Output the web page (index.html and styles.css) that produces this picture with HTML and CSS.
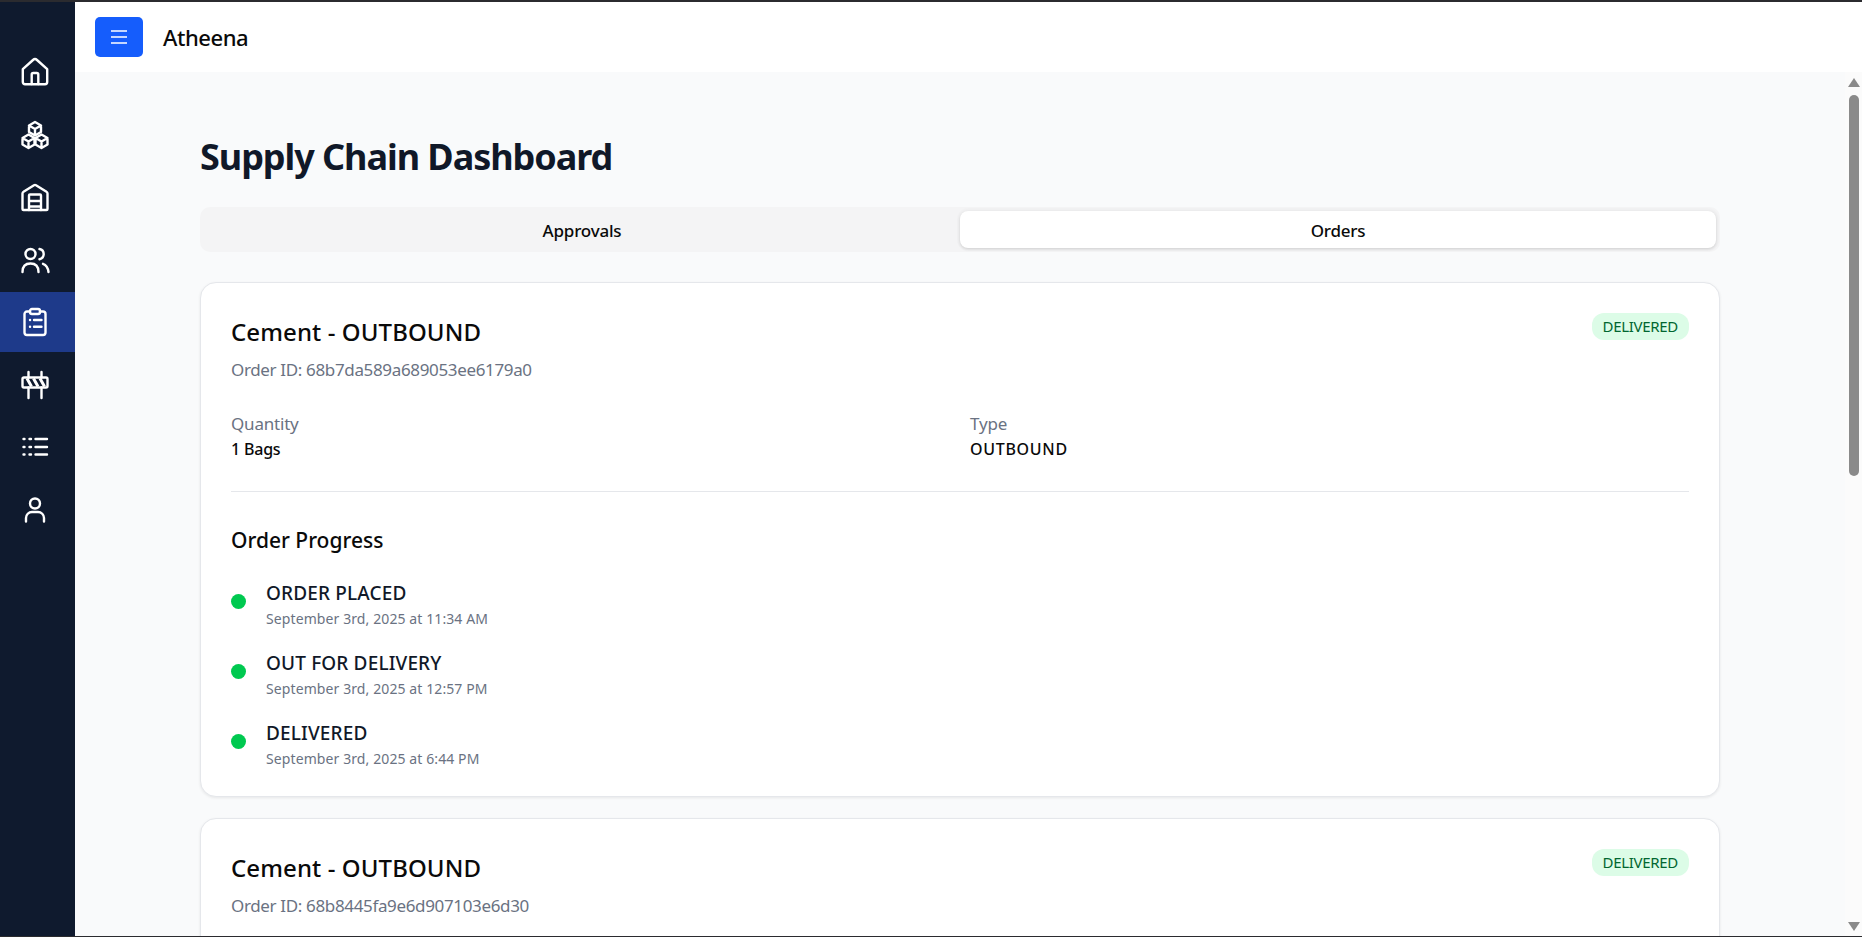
FILE: index.html
```html
<!doctype html>
<html>

<head>
    <title>Atheena</title>
    <link rel="stylesheet" href="styles.css">
</head>

<body>
    <div class="topLine"></div>

    <div class="app">
        <nav class="sideBar">
            <a class="navItem">
                <svg class="navIcon" viewBox="0 0 30 30">
                    <path d="M2.800 12.200 13 3a3 3 0 0 1 4 0l10.200 9.200V25a2.200 2.200 0 0 1-2.200 2.200H5A2.200 2.200 0 0 1 2.800 25z" />
                    <path d="M11.700 27V17.500a1.500 1.500 0 0 1 1.500-1.500h3.600a1.500 1.500 0 0 1 1.500 1.500V27" />
                </svg>
            </a>
            <a class="navItem">
                <svg class="navIcon" viewBox="0 0 30 30">
                    <path d="M15 2 21 5.500V12L15 15.500 9 12V5.500z M9 5.500 15 9 21 5.500 M15 9V15.500" />
                    <path d="M8.500 14.500 14.500 18V24.500L8.500 28 2.500 24.500V18z M2.500 18 8.500 21.500 14.500 18 M8.500 21.500V28" />
                    <path d="M21.500 14.500 27.500 18V24.500L21.500 28 15.500 24.500V18z M15.500 18 21.500 21.500 27.500 18 M21.500 21.500V28" />
                </svg>
            </a>
            <a class="navItem">
                <svg class="navIcon" viewBox="0 0 30 30">
                    <path d="M2.500 11.500a2 2 0 0 1 1-1.700L14 3.200a2 2 0 0 1 2 0l10.500 6.600a2 2 0 0 1 1 1.700V27a1 1 0 0 1-1 1h-23a1 1 0 0 1-1-1z" />
                    <path d="M9 28V13.500a1 1 0 0 1 1-1h10a1 1 0 0 1 1 1V28 M9 19h12 M9 24.500h12" />
                </svg>
            </a>
            <a class="navItem">
                <svg class="navIcon" viewBox="0 0 30 30">
                    <circle cx="10.500" cy="9" r="5" />
                    <path d="M2.500 27c0-5.500 3-8.500 8-8.500s8 3 8 8.500" />
                    <path d="M19.500 4a5.200 5.200 0 0 1 0 10.200 M23 18.800c3.300 1.200 5 4.200 5.500 8.200" />
                </svg>
            </a>
            <a class="navItem navItemActive">
                <svg class="navIcon" viewBox="0 0 30 30">
                    <path d="M10 4.500H7a2.500 2.500 0 0 0-2.500 2.500v18.500A2.500 2.500 0 0 0 7 28h16a2.500 2.500 0 0 0 2.500-2.500V7A2.500 2.500 0 0 0 23 4.500h-3" />
                    <rect x="10" y="2" width="10" height="5" rx="2" />
                    <path d="M10 13h.1 M14 13h7.500 M10 19.700h.1 M14 19.700h7.500" />
                </svg>
            </a>
            <a class="navItem">
                <svg class="navIcon" viewBox="0 0 30 30">
                    <rect x="2.500" y="7.500" width="25" height="10" rx="1.500" />
                    <path d="M8.500 2V7.500 M21.500 2V7.500 M8.500 17.500V28 M21.500 17.500V28" />
                    <path class="barrierStripes" d="M7 8.500 11.500 16.500 M13.500 8.500 18 16.500 M20 8.500 24.500 16.500" />
                </svg>
            </a>
            <a class="navItem">
                <svg class="navIcon" viewBox="0 0 30 30">
                    <path d="M3.500 7h1 M9.500 7h1.500 M15.500 7H27" />
                    <path d="M3.500 15h1 M9.500 15h1.500 M15.500 15H27" />
                    <path d="M3.500 22.500h1 M9.500 22.500h1.500 M15.500 22.500H27" />
                </svg>
            </a>
            <a class="navItem">
                <svg class="navIcon" viewBox="0 0 30 30">
                    <circle cx="15" cy="8.500" r="5" />
                    <path d="M6 26.500V23a6 6 0 0 1 6-6h6a6 6 0 0 1 6 6v3.500" />
                </svg>
            </a>
        </nav>

        <div class="mainArea">
            <header class="topBar">
                <button class="menuButton">
                    <svg class="menuIcon" viewBox="0 0 16 14">
                        <path d="M0 1h16 M0 7h16 M0 13h16" />
                    </svg>
                </button>
                <span class="brandName">Atheena</span>
            </header>

            <div class="pageBody">
                <main class="content">
                    <h1 class="pageTitle">Supply Chain Dashboard</h1>

                    <div class="tabs">
                        <div class="tab">Approvals</div>
                        <div class="tab tabActive">Orders</div>
                    </div>

                    <section class="orderCard">
                        <div class="cardHead">
                            <div>
                                <h2 class="orderTitle">Cement - OUTBOUND</h2>
                                <p class="orderId">Order ID: 68b7da589a689053ee6179a0</p>
                            </div>
                            <span class="statusBadge">DELIVERED</span>
                        </div>

                        <div class="orderMeta">
                            <div>
                                <p class="metaLabel">Quantity</p>
                                <p class="metaValue">1 Bags</p>
                            </div>
                            <div>
                                <p class="metaLabel">Type</p>
                                <p class="metaValue metaValueCaps">OUTBOUND</p>
                            </div>
                        </div>

                        <div class="progress">
                            <h3 class="progressTitle">Order Progress</h3>
                            <ul class="steps">
                                <li class="step">
                                    <span class="stepDot"></span>
                                    <div>
                                        <p class="stepName">ORDER PLACED</p>
                                        <p class="stepDate">September 3rd, 2025 at 11:34 AM</p>
                                    </div>
                                </li>
                                <li class="step">
                                    <span class="stepDot"></span>
                                    <div>
                                        <p class="stepName">OUT FOR DELIVERY</p>
                                        <p class="stepDate">September 3rd, 2025 at 12:57 PM</p>
                                    </div>
                                </li>
                                <li class="step">
                                    <span class="stepDot"></span>
                                    <div>
                                        <p class="stepName">DELIVERED</p>
                                        <p class="stepDate">September 3rd, 2025 at 6:44 PM</p>
                                    </div>
                                </li>
                            </ul>
                        </div>
                    </section>

                    <section class="orderCard orderCardLast">
                        <div class="cardHead">
                            <div>
                                <h2 class="orderTitle">Cement - OUTBOUND</h2>
                                <p class="orderId">Order ID: 68b8445fa9e6d907103e6d30</p>
                            </div>
                            <span class="statusBadge">DELIVERED</span>
                        </div>
                    </section>
                </main>

                <div class="scrollBar">
                    <span class="scrollArrowUp"></span>
                    <span class="scrollThumb"></span>
                    <span class="scrollArrowDown"></span>
                </div>
            </div>
        </div>
    </div>

    <div class="bottomLine"></div>
</body>

</html>
```

FILE: styles.css
```css
* {
    margin: 0;
    padding: 0;
    box-sizing: border-box;
}

body {
    font-family: "Noto Sans", "Open Sans", Arial, sans-serif;
    height: 937px;
    overflow: hidden;
    display: flex;
    flex-direction: column;
    color: #0a0a0a;
}

.topLine {
    height: 2px;
    background-color: #2b2b2f;
}

.bottomLine {
    height: 1px;
    background-color: #2b2b2f;
}

.app {
    flex: 1;
    min-height: 0;
    display: flex;
}

/* left icon bar */
.sideBar {
    width: 75px;
    padding-top: 40px;
    background-color: #0f1a2e;
    display: flex;
    flex-direction: column;
    gap: 2.5px;
}

.navItem {
    height: 60px;
    padding-right: 5px;
    display: flex;
    justify-content: center;
    align-items: center;
}

.navItemActive {
    background-color: #1e3a8a;
}

.navIcon {
    width: 30px;
    height: 30px;
    fill: none;
    stroke: white;
    stroke-width: 2.4;
    stroke-linecap: round;
    stroke-linejoin: round;
}

.barrierStripes {
    stroke-width: 3;
    stroke-linecap: butt;
}

.mainArea {
    flex: 1;
    min-width: 0;
    display: flex;
    flex-direction: column;
}

.topBar {
    height: 70px;
    padding-left: 20px;
    background-color: white;
    display: flex;
    align-items: center;
    gap: 20px;
}

.menuButton {
    width: 48px;
    height: 40px;
    border: none;
    border-radius: 5px;
    background-color: #155dfc;
    display: flex;
    justify-content: center;
    align-items: center;
}

.menuIcon {
    width: 16px;
    height: 14px;
    fill: none;
    stroke: white;
    stroke-width: 1.5;
}

.brandName {
    font-size: 22px;
    font-weight: 500;
    letter-spacing: -0.45px;
}

.pageBody {
    flex: 1;
    min-height: 0;
    display: flex;
    background-color: #f9fafb;
}

.content {
    flex: 1;
    min-width: 0;
    overflow: hidden;
    padding: 65px 125px 0;
}

.pageTitle {
    font-size: 36px;
    line-height: 40px;
    font-weight: 700;
    color: #101828;
    letter-spacing: -1.05px;
    margin-bottom: 30px;
}

.tabs {
    height: 45px;
    padding: 4px;
    border-radius: 10px;
    background-color: #f4f4f5;
    display: flex;
    margin-bottom: 30px;
}

.tab {
    flex: 1;
    padding-top: 1px;
    border-radius: 8px;
    font-size: 17px;
    font-weight: 500;
    letter-spacing: -0.2px;
    display: flex;
    justify-content: center;
    align-items: center;
}

.tabActive {
    background-color: white;
    box-shadow: 0 1px 3px rgba(0, 0, 0, 0.15), 0 0 0 3px rgba(0, 0, 0, 0.01);
}

.orderCard {
    padding: 30px;
    border: 1px solid #e5e7eb;
    border-radius: 16px;
    background-color: white;
    box-shadow: 0 1px 3px rgba(0, 0, 0, 0.08);
    margin-bottom: 21px;
}

.orderCardLast {
    min-height: 300px;
}

.cardHead {
    display: flex;
    justify-content: space-between;
    align-items: flex-start;
}

.orderTitle {
    font-size: 24px;
    line-height: 38px;
    font-weight: 500;
    letter-spacing: 0.1px;
}

.orderId {
    font-size: 17px;
    line-height: 24px;
    color: #6a7282;
    letter-spacing: -0.35px;
    margin-top: 7px;
}

.statusBadge {
    height: 27px;
    padding: 0 11px;
    border-radius: 12px;
    background-color: #dcfce7;
    color: #016630;
    font-size: 15px;
    line-height: 27px;
    letter-spacing: -0.3px;
}

.orderMeta {
    display: grid;
    grid-template-columns: 1fr 1fr;
    gap: 20px;
    margin-top: 30px;
}

.metaLabel {
    font-size: 17px;
    line-height: 24px;
    color: #6a7282;
    letter-spacing: -0.2px;
}

.metaValue {
    font-size: 16px;
    line-height: 24px;
    font-weight: 500;
    letter-spacing: -0.2px;
    margin-top: 1px;
}

.metaValueCaps {
    letter-spacing: 0.7px;
}

.progress {
    border-top: 1px solid #e5e7eb;
    margin-top: 30px;
    margin-bottom: -4px;
    padding-top: 32px;
}

.progressTitle {
    font-size: 21px;
    line-height: 32px;
    font-weight: 500;
    margin-bottom: 23px;
}

.steps {
    list-style: none;
    display: flex;
    flex-direction: column;
    gap: 19px;
}

.step {
    display: flex;
    align-items: flex-start;
    gap: 20px;
}

.stepDot {
    width: 15px;
    height: 15px;
    margin-top: 15px;
    border-radius: 50%;
    background-color: #00c950;
}

.stepName {
    font-size: 19px;
    line-height: 28px;
    font-weight: 500;
    color: #101828;
    letter-spacing: 0.15px;
}

.stepDate {
    font-size: 14px;
    line-height: 23px;
    color: #6a7282;
    letter-spacing: 0.1px;
}

/* drawn scrollbar, the screenshot has one */
.scrollBar {
    width: 17px;
    padding-top: 6px;
    background-color: #fbfbfb;
    display: flex;
    flex-direction: column;
    align-items: center;
}

.scrollArrowUp {
    width: 0;
    height: 0;
    border-left: 6px solid transparent;
    border-right: 6px solid transparent;
    border-bottom: 9px solid #8a8a8a;
}

.scrollThumb {
    width: 10px;
    height: 381px;
    border-radius: 5px;
    background-color: #8a8a8a;
    margin-top: 8px;
}

.scrollArrowDown {
    width: 0;
    height: 0;
    border-left: 6px solid transparent;
    border-right: 6px solid transparent;
    border-top: 9px solid #8a8a8a;
    margin-top: auto;
    margin-bottom: 5px;
}
```
